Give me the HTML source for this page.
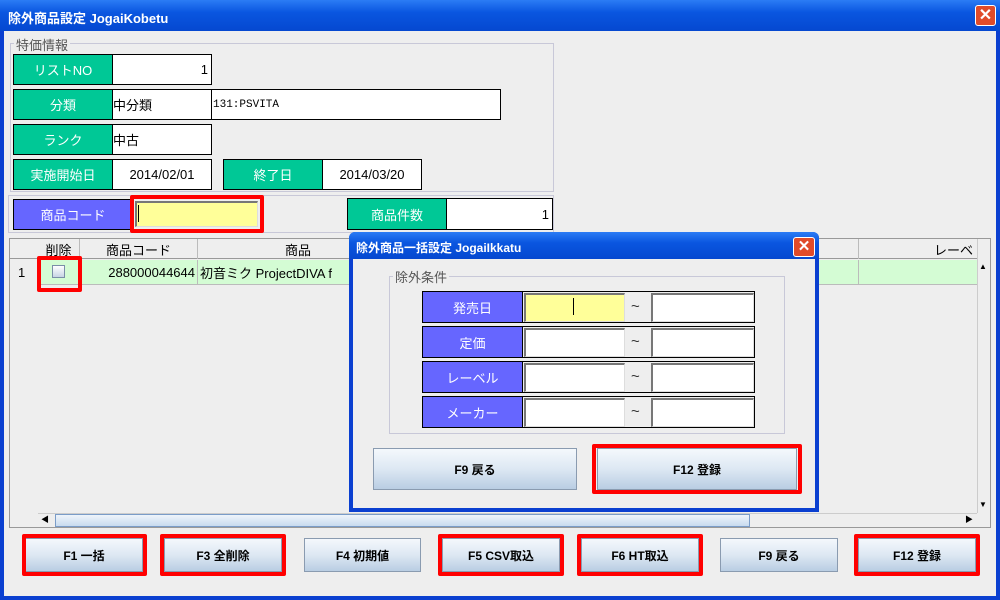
<!DOCTYPE html>
<html><head><meta charset="utf-8"><style>
*{box-sizing:border-box;margin:0;padding:0}
body{width:1000px;height:600px;overflow:hidden;background:#0a3fd0;font-family:"Liberation Sans","Noto Sans CJK JP",sans-serif;position:relative}
.a{position:absolute}
.tb{background:linear-gradient(#2b7cf5,#0a56e0 40%,#0548d0);color:#fff;font-weight:bold;font-size:13px}
.lg{position:absolute;background:#00c896;border:1px solid #000;color:#fff;font-size:13px;display:flex;align-items:center;justify-content:center}
.lp{position:absolute;background:#6666ff;border:1px solid #000;color:#fff;font-size:13px;display:flex;align-items:center;justify-content:center}
.v{position:absolute;background:#fff;border:1px solid #000;font-size:13px;display:flex;align-items:center;color:#000}
.btn{position:absolute;background:linear-gradient(#f4f8fc,#dde8f3 50%,#b9cde3);border:1px solid #8a9bb0;font-size:12px;font-weight:bold;display:flex;align-items:center;justify-content:center;color:#000}
.red{position:absolute;border:4px solid #f00;border-radius:2px}
.inp{position:absolute;background:#fff;border-top:2px solid #777;border-left:2px solid #777;border-right:1px solid #ddd;border-bottom:1px solid #ddd}
.cell{position:absolute;font-size:13px;color:#000;display:flex;align-items:center}
.t{position:absolute;font-size:15px;color:#333}
</style></head><body>
<div class="a tb" style="left:0;top:0;width:1000px;height:31px;padding:8px 8px">除外商品設定 JogaiKobetu</div>
<div class="a" style="left:975px;top:5px;width:21px;height:21px;background:#e04b2a;border:1px solid #fff;border-radius:3px;color:#fff;font-size:16px;font-weight:bold;text-align:center;line-height:19px">✕</div>
<div class="a" style="left:4px;top:31px;width:992px;height:565px;background:#eeeeee"></div>
<div class="a" style="left:10px;top:43px;width:544px;height:149px;border:1px solid #c8c8d8"></div>
<div class="a" style="left:14px;top:35px;font-size:13px;color:#555;background:#eee;padding:0 2px">特価情報</div>
<div class="lg" style="left:13px;top:54px;width:100px;height:31px">リストNO</div>
<div class="v" style="left:112px;top:54px;width:100px;height:31px;justify-content:flex-end;padding-right:3px">1</div>
<div class="lg" style="left:13px;top:89px;width:100px;height:31px">分類</div>
<div class="v" style="left:112px;top:89px;width:100px;height:31px">中分類</div>
<div class="v" style="left:211px;top:89px;width:290px;height:31px;font-family:'Liberation Mono',monospace;font-size:11px;padding-left:1px">131:PSVITA</div>
<div class="lg" style="left:13px;top:124px;width:100px;height:31px">ランク</div>
<div class="v" style="left:112px;top:124px;width:100px;height:31px">中古</div>
<div class="lg" style="left:13px;top:159px;width:100px;height:31px">実施開始日</div>
<div class="v" style="left:112px;top:159px;width:100px;height:31px;justify-content:center">2014/02/01</div>
<div class="lg" style="left:223px;top:159px;width:100px;height:31px">終了日</div>
<div class="v" style="left:322px;top:159px;width:100px;height:31px;justify-content:center">2014/03/20</div>
<div class="a" style="left:8px;top:195px;width:546px;height:38px;border:1px solid #c8c8d8"></div>
<div class="lp" style="left:13px;top:199px;width:120px;height:31px">商品コード</div>
<div class="inp" style="left:135px;top:201px;width:123px;height:26px;background:#ffff99"></div>
<div class="a" style="left:138px;top:205px;width:1px;height:17px;background:#000"></div>
<div class="red" style="left:130px;top:195px;width:134px;height:38px"></div>
<div class="lg" style="left:347px;top:198px;width:100px;height:32px">商品件数</div>
<div class="v" style="left:446px;top:198px;width:107px;height:32px;justify-content:flex-end;padding-right:3px">1</div>
<div class="a" style="left:9px;top:238px;width:982px;height:290px;border:1px solid #999;background:#eee"></div>
<div class="a" style="left:10px;top:239px;width:967px;height:20px;background:#eee;border-bottom:1px solid #999"></div>
<div class="cell" style="left:38px;top:239px;width:42px;height:20px;justify-content:center;border-right:1px solid #bbb">削除</div>
<div class="cell" style="left:80px;top:239px;width:118px;height:20px;justify-content:center;border-right:1px solid #bbb">商品コード</div>
<div class="cell" style="left:198px;top:239px;width:200px;height:20px;justify-content:center">商品</div>
<div class="cell" style="left:858px;top:239px;width:119px;height:20px;justify-content:flex-end;border-left:1px solid #bbb;padding-right:4px">レーベ</div>
<div class="a" style="left:10px;top:260px;width:967px;height:25px;background:#d4fcd4;border-bottom:1px solid #bbb"></div>
<div class="a" style="left:10px;top:260px;width:28px;height:25px;background:#eee"></div>
<div class="cell" style="left:18px;top:260px;height:25px">1</div>
<div class="a" style="left:52px;top:265px;width:13px;height:13px;border:1px solid #7a8ea8;background:linear-gradient(#fff,#c8d4e4)"></div>
<div class="cell" style="left:80px;top:260px;width:118px;height:25px;justify-content:flex-end;border-right:1px solid #bbb;border-left:1px solid #bbb;padding-right:2px">288000044644</div>
<div class="cell" style="left:200px;top:260px;height:25px">初音ミク ProjectDIVA f</div>
<div class="a" style="left:858px;top:260px;width:1px;height:25px;background:#bbb"></div>
<div class="red" style="left:37px;top:256px;width:45px;height:36px"></div>
<div class="a" style="left:977px;top:239px;width:13px;height:274px;background:#eee;border-left:1px solid #ccc"></div>
<div class="a" style="left:979px;top:262px;font-size:8px">▲</div>
<div class="a" style="left:979px;top:500px;font-size:8px">▼</div>
<div class="a" style="left:38px;top:513px;width:939px;height:14px;background:#eee;border-top:1px solid #ccc"></div>
<div class="a" style="left:41px;top:514px;font-size:8px">◀</div>
<div class="a" style="left:55px;top:514px;width:695px;height:13px;background:linear-gradient(#eef4fb,#c8dbef);border:1px solid #7a9cc8"></div>
<div class="a" style="left:965px;top:514px;font-size:8px">▶</div>
<div class="btn" style="left:25px;top:538px;width:118px;height:34px">F1 一括</div>
<div class="red" style="left:22px;top:534px;width:125px;height:42px"></div>
<div class="btn" style="left:164px;top:538px;width:118px;height:34px">F3 全削除</div>
<div class="red" style="left:160px;top:534px;width:126px;height:42px"></div>
<div class="btn" style="left:304px;top:538px;width:117px;height:34px">F4 初期値</div>
<div class="btn" style="left:442px;top:538px;width:118px;height:34px">F5 CSV取込</div>
<div class="red" style="left:438px;top:534px;width:126px;height:42px"></div>
<div class="btn" style="left:581px;top:538px;width:118px;height:34px">F6 HT取込</div>
<div class="red" style="left:577px;top:534px;width:126px;height:42px"></div>
<div class="btn" style="left:720px;top:538px;width:118px;height:34px">F9 戻る</div>
<div class="btn" style="left:858px;top:538px;width:118px;height:34px">F12 登録</div>
<div class="red" style="left:854px;top:534px;width:126px;height:42px"></div>
<div class="a" style="left:349px;top:232px;width:470px;height:280px;background:#0a3fd0;border-radius:6px 6px 0 0"></div>
<div class="a tb" style="left:349px;top:232px;width:470px;height:27px;padding:7px 7px;font-size:12px;border-radius:6px 6px 0 0">除外商品一括設定 JogaiIkkatu</div>
<div class="a" style="left:793px;top:237px;width:22px;height:20px;background:#e04b2a;border:1px solid #fff;border-radius:3px;color:#fff;font-size:15px;font-weight:bold;text-align:center;line-height:18px">✕</div>
<div class="a" style="left:353px;top:259px;width:462px;height:249px;background:#eee"></div>
<div class="a" style="left:389px;top:276px;width:396px;height:158px;border:1px solid #c8c8d8"></div>
<div class="a" style="left:393px;top:267px;font-size:13px;color:#555;background:#eee;padding:0 2px">除外条件</div>
<div class="a" style="left:422px;top:291px;width:333px;height:32px;border:1px solid #000;background:#eee"></div>
<div class="lp" style="left:422px;top:291px;width:101px;height:32px">発売日</div>
<div class="inp" style="left:524px;top:293px;width:101px;height:29px;background:#ffff99"></div>
<div class="a" style="left:573px;top:298px;width:1px;height:17px;background:#000"></div>
<div class="t" style="left:631px;top:298px">~</div>
<div class="inp" style="left:651px;top:293px;width:103px;height:29px"></div>
<div class="a" style="left:422px;top:326px;width:333px;height:32px;border:1px solid #000;background:#eee"></div>
<div class="lp" style="left:422px;top:326px;width:101px;height:32px">定価</div>
<div class="inp" style="left:524px;top:328px;width:101px;height:29px"></div>
<div class="t" style="left:631px;top:333px">~</div>
<div class="inp" style="left:651px;top:328px;width:103px;height:29px"></div>
<div class="a" style="left:422px;top:361px;width:333px;height:32px;border:1px solid #000;background:#eee"></div>
<div class="lp" style="left:422px;top:361px;width:101px;height:32px">レーベル</div>
<div class="inp" style="left:524px;top:363px;width:101px;height:29px"></div>
<div class="t" style="left:631px;top:368px">~</div>
<div class="inp" style="left:651px;top:363px;width:103px;height:29px"></div>
<div class="a" style="left:422px;top:396px;width:333px;height:32px;border:1px solid #000;background:#eee"></div>
<div class="lp" style="left:422px;top:396px;width:101px;height:32px">メーカー</div>
<div class="inp" style="left:524px;top:398px;width:101px;height:29px"></div>
<div class="t" style="left:631px;top:403px">~</div>
<div class="inp" style="left:651px;top:398px;width:103px;height:29px"></div>
<div class="btn" style="left:373px;top:448px;width:204px;height:42px">F9 戻る</div>
<div class="btn" style="left:597px;top:448px;width:200px;height:42px">F12 登録</div>
<div class="red" style="left:592px;top:444px;width:210px;height:50px"></div>
</body></html>
